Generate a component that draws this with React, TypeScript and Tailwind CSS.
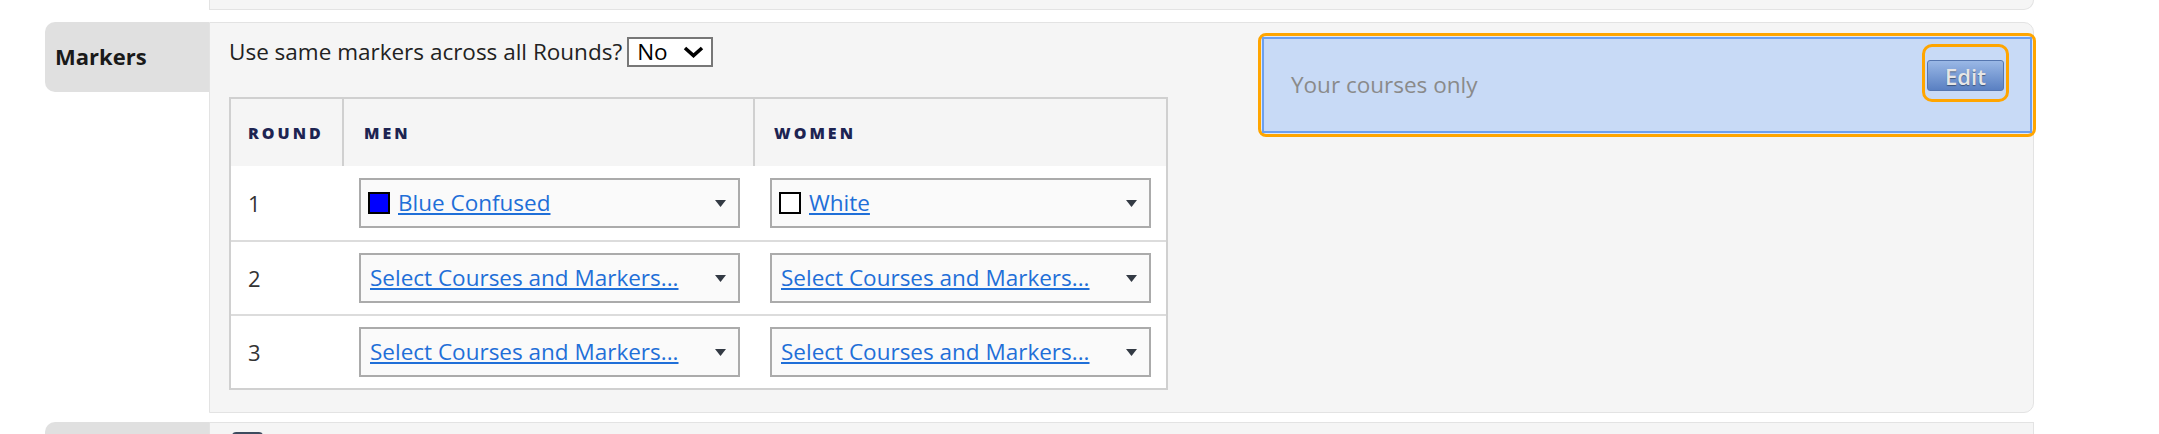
import React from 'react'

const rows = [
  { round: '1', men: { swatch: 'bg-[#0000ff]', label: 'Blue Confused' }, women: { swatch: 'bg-white', label: 'White' } },
  { round: '2', men: null, women: null },
  { round: '3', men: null, women: null },
]

type Marker = { swatch: string; label: string } | null

const Caret = () => (
  <svg width="11" height="7" viewBox="0 0 11 7" className="shrink-0">
    <polygon points="0,0 11,0 5.5,7" fill="#333a44" />
  </svg>
)

const MarkerSelect = ({ marker }: { marker: Marker }) => (
  <div className="h-[50px] border-2 border-[#ababab] bg-[#fafafa] flex items-center justify-between pl-[7px] pr-[12px]">
    {marker ? (
      <div className="flex items-center">
        <span className={`w-[22px] h-[22px] border-2 border-black ${marker.swatch} mr-[8px]`} />
        <a className="text-[#1f6fd8] underline text-[22.5px]">{marker.label}</a>
      </div>
    ) : (
      <a className="text-[#1f6fd8] underline text-[22.5px] pl-[2px]">Select Courses and Markers...</a>
    )}
    <Caret />
  </div>
)

export default function App() {
  return (
    <div className="w-[2159px] h-[434px] overflow-hidden bg-white font-['Open_Sans',sans-serif] text-[#222]">
      <div className="pl-[45px] pr-[125px]">
        {/* end of the section above */}
        <div className="ml-[164px] h-[10px] bg-[#f5f5f5] border-x border-b border-[#e3e3e3] rounded-br-[10px]" />

        <div className="mt-[12px] flex h-[391px]">
          <div className="w-[164px] h-[70px] shrink-0 bg-[#e0e0e0] rounded-l-[10px] flex items-center pl-[10px] pb-[2px]">
            <span className="text-[22px] font-bold text-[#1a1a1a]">Markers</span>
          </div>
          <div className="flex-1 bg-[#f5f5f5] border border-[#e3e3e3] rounded-r-[10px] flex justify-between">
            <div className="pl-[19px] pt-[14px]">
              <div className="flex items-center h-[30px]">
                <span className="text-[22.5px]">Use same markers across all Rounds?</span>
                <div className="ml-[5px] w-[86px] h-[30px] border-2 border-[#777] bg-white flex items-center justify-between pl-[8px] pr-[6px]">
                  <span className="text-[22.5px] text-black leading-none">No</span>
                  <svg width="23" height="12" viewBox="0 0 23 12">
                    <polyline points="3,2 11.5,9.5 20,2" fill="none" stroke="#000" strokeWidth="3.6" />
                  </svg>
                </div>
              </div>

              <div className="mt-[30px] w-[939px] border-2 border-[#d0d0d0]">
                <div className="grid grid-cols-[113px_411px_411px] h-[67px] bg-[#f5f5f5]">
                  <div className="border-r-2 border-[#d0d0d0] flex items-center pl-[17px] text-[16px] font-extrabold tracking-[3px] text-[#1d2452]">ROUND</div>
                  <div className="border-r-2 border-[#d0d0d0] flex items-center pl-[20px] text-[16px] font-extrabold tracking-[3px] text-[#1d2452]">MEN</div>
                  <div className="flex items-center pl-[19px] text-[16px] font-extrabold tracking-[3px] text-[#1d2452]">WOMEN</div>
                </div>
                {rows.map((row, i) => (
                  <div
                    key={row.round}
                    className={`grid grid-cols-[113px_411px_411px] items-center bg-white ${i === 0 ? 'h-[74px]' : 'h-[74px] border-t-2 border-[#dcdcdc]'}`}
                  >
                    <div className="pl-[17px] text-[22px] text-[#333]">{row.round}</div>
                    <div className="px-[15px]">
                      <MarkerSelect marker={row.men} />
                    </div>
                    <div className="px-[15px]">
                      <MarkerSelect marker={row.women} />
                    </div>
                  </div>
                ))}
              </div>
            </div>

            <div className="w-[778px] mr-[-3px] mt-[10px] h-[104px] border-[3px] border-[#ffa500] rounded-[8px] p-[1px] bg-[#dfe8f7]">
              <div className="h-full border-2 border-[#6b9ff0] bg-[#c8daf6] flex justify-between">
                <span className="self-center pl-[27px] text-[22.5px] text-[#8a8a8a]">Your courses only</span>
                <div className="mt-[5px] mr-[21px] w-[87px] h-[58px] border-[3px] border-[#ffa500] rounded-[10px] flex justify-center pt-[13px]">
                  <button className="w-[77px] h-[31px] rounded-[3px] border border-[#5576b0] bg-gradient-to-b from-[#9ab8e6] to-[#5a80c2] text-[22px] font-semibold text-[#e6e6e6] leading-none [text-shadow:0_1px_1px_rgba(0,0,0,0.4)]">
                    Edit
                  </button>
                </div>
              </div>
            </div>
          </div>
        </div>

        {/* start of the next section */}
        <div className="mt-[9px] flex">
          <div className="w-[164px] h-[40px] shrink-0 bg-[#e0e0e0] rounded-tl-[10px]" />
          <div className="flex-1 h-[40px] bg-[#f5f5f5] border-t border-x border-[#e3e3e3] pl-[22px] pt-[9px]">
            <div className="w-[31px] h-[20px] bg-[#3d4b5e] rounded-t-[4px]" />
          </div>
        </div>
      </div>
    </div>
  )
}
